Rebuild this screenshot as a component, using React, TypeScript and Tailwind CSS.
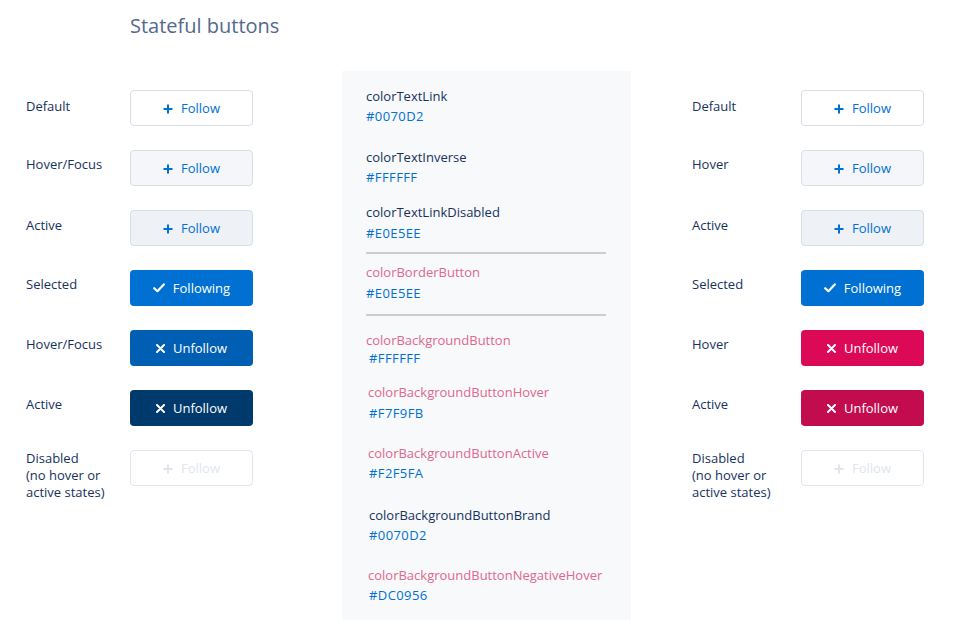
import type { ReactNode } from "react"

type Variant =
  | "default"
  | "hover"
  | "active"
  | "selected"
  | "brandHover"
  | "brandActive"
  | "negHover"
  | "negActive"
  | "disabled"

type Icon = "plus" | "check" | "close"

const VARIANT_CLASS: Record<Variant, string> = {
  default: "border border-[#d8dde6] bg-white text-[#0070d2]",
  hover: "border border-[#d8dde6] bg-[#f4f6f9] text-[#0070d2]",
  active: "border border-[#d8dde6] bg-[#eef1f6] text-[#0070d2]",
  selected: "bg-[#0070d2] text-white",
  brandHover: "bg-[#005fb2] text-white",
  brandActive: "bg-[#00396b] text-white",
  negHover: "bg-[#dc0956] text-white",
  negActive: "bg-[#c20c4e] text-white",
  disabled: "border border-[#e0e5ee] bg-white text-[#e0e5ee]",
}

function Glyph({ icon }: { icon: Icon }) {
  if (icon === "plus") {
    return (
      <svg width="10" height="10" viewBox="0 0 10 10" className="shrink-0">
        <path d="M5 0.5v9M0.5 5h9" stroke="currentColor" strokeWidth="2" />
      </svg>
    )
  }
  if (icon === "check") {
    return (
      <svg width="12" height="10" viewBox="0 0 12 10" className="mb-[3px] shrink-0">
        <path
          d="M1.2 5.2 4.4 8.2 10.8 1.4"
          fill="none"
          stroke="currentColor"
          strokeWidth="2.2"
          strokeLinecap="round"
          strokeLinejoin="round"
        />
      </svg>
    )
  }
  return (
    <svg width="9" height="9" viewBox="0 0 9 9" className="mb-[2px] shrink-0">
      <path
        d="M1 1l7 7M8 1 1 8"
        stroke="currentColor"
        strokeWidth="2"
        strokeLinecap="round"
      />
    </svg>
  )
}

function StateButton({ variant, icon, label }: { variant: Variant; icon: Icon; label: string }) {
  return (
    <div
      className={`flex h-[36px] w-[123px] shrink-0 items-center justify-center gap-2 rounded-[4px] pt-[2px] text-[13px] ${VARIANT_CLASS[variant]}`}
    >
      <Glyph icon={icon} />
      <span>{label}</span>
    </div>
  )
}

type Row = { label: ReactNode; pad: string; variant: Variant; icon: Icon; text: string }

const LEFT_ROWS: Row[] = [
  { label: "Default", pad: "pt-[8px]", variant: "default", icon: "plus", text: "Follow" },
  { label: "Hover/Focus", pad: "pt-[6px]", variant: "hover", icon: "plus", text: "Follow" },
  { label: "Active", pad: "pt-[7px]", variant: "active", icon: "plus", text: "Follow" },
  { label: "Selected", pad: "pt-[6px]", variant: "selected", icon: "check", text: "Following" },
  { label: "Hover/Focus", pad: "pt-[6px]", variant: "brandHover", icon: "close", text: "Unfollow" },
  { label: "Active", pad: "pt-[6px]", variant: "brandActive", icon: "close", text: "Unfollow" },
]

const RIGHT_ROWS: Row[] = [
  { label: "Default", pad: "pt-[8px]", variant: "default", icon: "plus", text: "Follow" },
  { label: "Hover", pad: "pt-[6px]", variant: "hover", icon: "plus", text: "Follow" },
  { label: "Active", pad: "pt-[7px]", variant: "active", icon: "plus", text: "Follow" },
  { label: "Selected", pad: "pt-[6px]", variant: "selected", icon: "check", text: "Following" },
  { label: "Hover", pad: "pt-[6px]", variant: "negHover", icon: "close", text: "Unfollow" },
  { label: "Active", pad: "pt-[6px]", variant: "negActive", icon: "close", text: "Unfollow" },
]

function StateColumn({ rows, labelWidth }: { rows: Row[]; labelWidth: string }) {
  return (
    <div className="flex flex-col gap-[24px] pt-[19px]">
      {rows.map((row, i) => (
        <div className="flex h-[36px] items-start" key={i}>
          <div className={`${labelWidth} ${row.pad} text-[13px] leading-[17px] text-[#16325c]`}>
            {row.label}
          </div>
          <StateButton variant={row.variant} icon={row.icon} label={row.text} />
        </div>
      ))}
      <div className="flex items-start">
        <div className={`${labelWidth} text-[13px] leading-[17px] text-[#16325c]`}>
          Disabled
          <br />
          (no hover or
          <br />
          active states)
        </div>
        <StateButton variant="disabled" icon="plus" label="Follow" />
      </div>
    </div>
  )
}

type Token = { name: string; hex: string; pink?: boolean; nameCls: string; hexCls: string }

const TOKENS: Token[] = [
  { name: "colorTextLink", hex: "#0070D2", nameCls: "mt-[15px] leading-[20px]", hexCls: "leading-[20px]" },
  { name: "colorTextInverse", hex: "#FFFFFF", nameCls: "mt-[21px] leading-[20px]", hexCls: "leading-[20px]" },
  { name: "colorTextLinkDisabled", hex: "#E0E5EE", nameCls: "mt-[15px] leading-[20px]", hexCls: "mt-[1px] leading-[20px]" },
]

const TOKENS_B: Token[] = [
  { name: "colorBorderButton", hex: "#E0E5EE", pink: true, nameCls: "mt-[8px] leading-[20px]", hexCls: "mt-[1px] leading-[20px]" },
]

const TOKENS_C: Token[] = [
  { name: "colorBackgroundButton", hex: "#FFFFFF", pink: true, nameCls: "mt-[15px] leading-[18px]", hexCls: "ml-[3px] leading-[18px]" },
  { name: "colorBackgroundButtonHover", hex: "#F7F9FB", pink: true, nameCls: "mt-[15px] ml-[2px] leading-[20px]", hexCls: "mt-[1px] ml-[3px] leading-[20px]" },
  { name: "colorBackgroundButtonActive", hex: "#F2F5FA", pink: true, nameCls: "mt-[20px] ml-[2px] leading-[20px]", hexCls: "ml-[3px] leading-[20px]" },
  { name: "colorBackgroundButtonBrand", hex: "#0070D2", nameCls: "mt-[22px] ml-[3px] leading-[20px]", hexCls: "ml-[3px] leading-[20px]" },
  { name: "colorBackgroundButtonNegativeHover", hex: "#DC0956", pink: true, nameCls: "mt-[20px] ml-[2px] leading-[20px]", hexCls: "ml-[3px] leading-[20px]" },
]

function TokenList({ tokens }: { tokens: Token[] }) {
  return (
    <>
      {tokens.map((t) => (
        <div key={t.name} className="flex flex-col items-start">
          <div className={`${t.nameCls} ${t.pink ? "text-[#e0688b]" : "text-[#16325c]"}`}>
            {t.name}
          </div>
          <div className={`${t.hexCls} tracking-[0.4px] text-[#0070d2]`}>{t.hex}</div>
        </div>
      ))}
    </>
  )
}

export default function App() {
  return (
    <div className="h-[620px] w-[953px] overflow-hidden bg-white font-['Open_Sans',sans-serif]">
      <h1 className="pl-[130px] pt-[12px] text-[20px] leading-[28px] font-normal text-[#54698d]">
        Stateful buttons
      </h1>
      <div className="mt-[31px] flex items-start">
        <div className="ml-[26px]">
          <StateColumn rows={LEFT_ROWS} labelWidth="w-[104px]" />
        </div>
        <div className="ml-[89px] flex h-[560px] w-[289px] flex-col bg-[#f7f9fb] pl-[24px] text-[13px]">
          <TokenList tokens={TOKENS} />
          <div className="mt-[9px] h-[2px] w-[240px] bg-[#c9ccd1]" />
          <TokenList tokens={TOKENS_B} />
          <div className="mt-[11px] h-[2px] w-[240px] bg-[#c9ccd1]" />
          <TokenList tokens={TOKENS_C} />
        </div>
        <div className="ml-[61px]">
          <StateColumn rows={RIGHT_ROWS} labelWidth="w-[109px]" />
        </div>
      </div>
    </div>
  )
}
